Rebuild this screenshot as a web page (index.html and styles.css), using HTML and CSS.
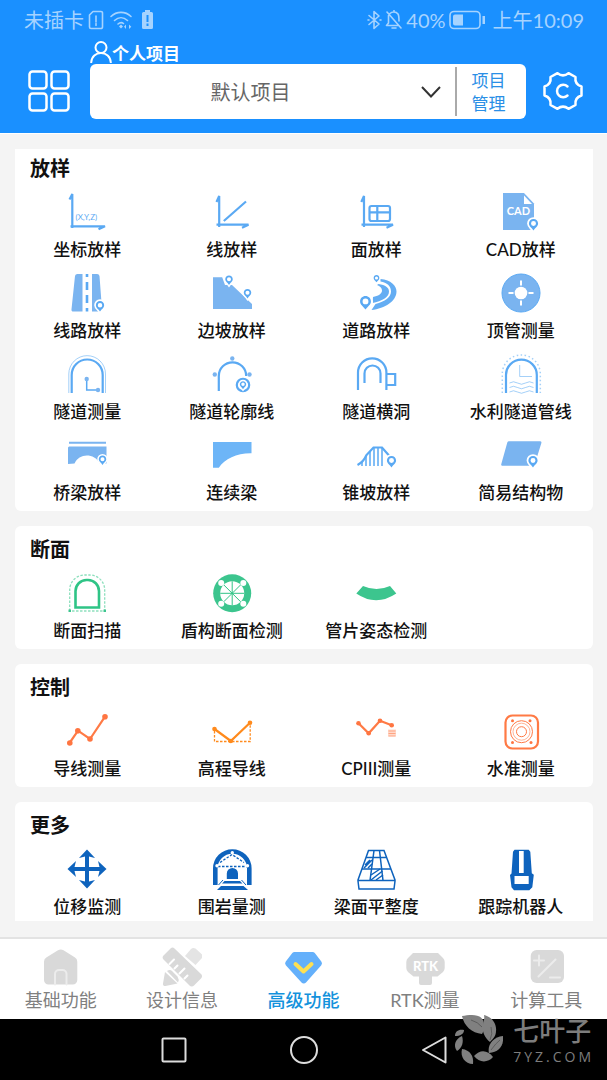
FILE: index.html
```html
<!DOCTYPE html>
<html lang="zh-CN">
<head>
<meta charset="utf-8">
<meta name="viewport" content="width=device-width, initial-scale=1">
<title>高级功能</title>
<link rel="stylesheet" href="styles.css">
</head>
<body>
<svg class="defs" aria-hidden="true">
  <symbol id="pin" viewBox="0 0 12 14" overflow="visible">
    <path class="halo" d="M6 1C3.200 1 1 3.200 1 6c0 3 3 4.500 5 7.500 2-3 5-4.500 5-7.500 0-2.800-2.200-5-5-5z"/>
    <path class="solid" fill-rule="evenodd" d="M6 1C3.200 1 1 3.200 1 6c0 3 3 4.500 5 7.500 2-3 5-4.500 5-7.500 0-2.800-2.200-5-5-5zM6 3.300a2.700 2.700 0 1 1 0 5.400 2.700 2.700 0 0 1 0-5.400z"/>
  </symbol>
</svg>
<header class="top">
  <div class="status">
    <div class="status-side">
      <span>未插卡</span>
      <svg width="17" height="20" viewBox="0 0 17 20"><path class="line" d="M6 1.500h8a1.500 1.500 0 0 1 1.500 1.500v14a1.500 1.500 0 0 1-1.500 1.500H4A1.500 1.500 0 0 1 2.500 17V5zM9 6v6M9 13.500v2"/></svg>
      <svg class="wifi" width="24" height="20" viewBox="0 0 24 20"><path class="line" d="M2 6.500c5.500-5.500 14.500-5.500 20 0M5.500 10.500c4-3.700 9-3.700 13 0M9 14c2-1.700 4-1.700 5.500-.5"/><path class="fill" d="M12 14.500l2 2-2 2-2-2zM17 14.500l-2 2.300 2 2.200zM20 14.500l2.300 2.300L20 19z"/></svg>
      <svg width="13" height="20" viewBox="0 0 13 20"><path class="fill" fill-rule="evenodd" d="M4 0h5v2h1.500a1.500 1.500 0 0 1 1.500 1.500v14a1.500 1.500 0 0 1-1.500 1.500h-8A1.500 1.500 0 0 1 1 17.500v-14A1.500 1.500 0 0 1 2.500 2H4zM5.500 5v7h2V5zM5.500 13.500v2.500h2v-2.500z"/></svg>
    </div>
    <div class="status-side right">
      <svg width="15" height="20" viewBox="0 0 15 20"><path class="line" d="M2 5.500l10 8.500-5 4.500v-17L12 6 2 14.500M1 10h1M13 10h1"/></svg>
      <svg class="bell" width="18" height="20" viewBox="0 0 18 20"><path class="line" d="M2 2l14 16M3.500 5.500V13L1.500 15.500H13M5 3.500C7 1.500 11 1.500 13 4c1 1.500 1 4 1 7M7 18h4M9 .5v1.500"/></svg>
      <span>40%</span>
      <svg width="37" height="20" viewBox="0 0 37 20"><rect class="line" x="1" y="1.500" width="30" height="17" rx="4"/><path class="fill" d="M6 4.500h8v11H6a2 2 0 0 1-2-2v-7a2 2 0 0 1 2-2zM33.500 6H36v8h-2.500z"/></svg>
      <span class="clock">上午10:09</span>
    </div>
  </div>
  <label class="owner" for="project">
    <svg width="22" height="22" viewBox="0 0 22 22"><circle class="line" cx="11" cy="6.500" r="5.500"/><path class="line" d="M1.200 21.500C1.500 15.500 6 12 11 12s9.500 3.500 9.800 9.500"/></svg>
    <span>个人项目</span>
  </label>
  <div class="project-row">
    <button class="icon-btn" aria-label="菜单">
      <svg width="42" height="42" viewBox="0 0 42 42"><g class="line"><rect x="1.500" y="1.500" width="17" height="17" rx="3"/><rect x="23.500" y="1.500" width="17" height="17" rx="3"/><rect x="1.500" y="23.500" width="17" height="17" rx="3"/><rect x="23.500" y="23.500" width="17" height="17" rx="3"/></g></svg>
    </button>
    <div class="project-box">
      <div class="picker">
        <select id="project"><option>默认项目</option></select>
        <svg class="chevron" width="20" height="12" viewBox="0 0 20 12"><path d="M1 1l9 9.500L19 1"/></svg>
      </div>
      <button class="manage">项目<br>管理</button>
    </div>
    <button class="icon-btn" aria-label="设置">
      <svg width="40" height="40" viewBox="0 0 40 40"><path class="line" d="M14.500 2.200Q20 6.500 25.500 2.200L32.500 6Q31.500 13.500 38.500 15.500V24.500Q31.500 26.500 32.500 34L25.500 37.800Q20 33.500 14.500 37.800L7.500 34Q8.500 26.500 1.500 24.500V15.500Q8.500 13.500 7.500 6Z"/><path class="line" d="M24.500 15.500a6.200 6.200 0 1 0 0 9"/></svg>
    </button>
  </div>
</header>

<main class="cards">
  <section class="card first sky">
    <h2>放样</h2>
    <div class="grid">
      <button class="item"><svg viewBox="0 0 40 40"><path class="s2" d="M2.500 7.500L5.300 2v34M3.500 34.300H38l-6.500 3"/><text class="tiny" x="8.500" y="28">(X,Y,Z)</text></svg><span>坐标放样</span></button>
      <button class="item"><svg viewBox="0 0 40 40"><path class="s2" d="M4.500 10l2.700-6v31M4.500 32.700H36.500l-6.500 3M11.800 29L34 9.500"/></svg><span>线放样</span></button>
      <button class="item"><svg viewBox="0 0 40 40"><path class="s2" d="M5.300 10L8 4v31M5.500 32.700H37l-6.500 3"/><rect class="s2" x="13.500" y="14" width="20.500" height="15" rx="2"/><path class="s2" d="M21.300 14v15M13.500 20.300H34"/></svg><span>面放样</span></button>
      <button class="item"><svg viewBox="0 0 40 40"><path class="f" d="M2 1h21l10 10.500V38H2z"/><path class="w" d="M23 3.500V12h8z"/><text class="badge" x="17.500" y="22.500">CAD</text><use href="#pin" x="27" y="26" width="11" height="13"/></svg><span>CAD放样</span></button>

      <button class="item"><svg viewBox="0 0 40 40"><path class="f" d="M10.500 1h5v37.500H6.500a2 2 0 0 1-2-2.300L8 3a2.500 2.500 0 0 1 2.500-2zM25 1h5a2.500 2.500 0 0 1 2.500 2L35 36.500a2 2 0 0 1-2 2h-8z"/><path class="s3" d="M20 1v3M20 9v8M20 22v8M20 35v3.500"/><use href="#pin" x="28" y="27" width="10" height="12"/></svg><span>线路放样</span></button>
      <button class="item"><svg viewBox="0 0 40 40"><path class="f" d="M1 4.300h9.200L13 12h7l20 19v5H1z"/><use href="#pin" x="12.500" y="1.500" width="9" height="11"/><use href="#pin" x="31" y="15" width="9" height="11"/></svg><span>边坡放样</span></button>
      <button class="item"><svg viewBox="0 0 40 40"><path class="f road" d="M24.500 6C35 7 40.500 12.500 40.500 18.500 40.500 28 29 35.500 15.500 37l4-6C29 28.500 35 24 35 18.500 35 13 31 9.500 24.500 8.500zM22.500 11c7 1 10.500 3.500 10.500 7.500 0 6-7 9.500-16.500 11.500L17 24c5-1 9-3 9-6.500 0-2.500-2-4.500-5-5.500z"/><use href="#pin" x="17" y="1.500" width="7" height="8"/><use href="#pin" x="3" y="21.500" width="13" height="16"/></svg><span>道路放样</span></button>
      <button class="item"><svg viewBox="0 0 40 40"><circle class="f" cx="20" cy="20" r="19"/><circle class="s1" cx="20" cy="20" r="19"/><circle class="w" cx="20" cy="20" r="6.300"/><path class="ws" d="M20 7.500v5M20 27.500v5M7.500 20h5M27.500 20h5"/></svg><span>顶管测量</span></button>

      <button class="item"><svg viewBox="0 0 40 40"><path class="s2" d="M4.700 39V21a15.500 15.500 0 0 1 31 0v18"/><path class="s1 pale" d="M1.800 39V20a18.300 18.300 0 0 1 36.700 0v19"/><path class="s15" d="M19.700 25v11H31"/><circle class="f" cx="19.700" cy="25" r="2.200"/><circle class="f" cx="31" cy="36" r="2.200"/></svg><span>隧道测量</span></button>
      <button class="item"><svg viewBox="0 0 40 40"><path class="s2" d="M6.800 37V22a13.700 13.700 0 0 1 27.400 0"/><circle class="f" cx="20.300" cy="4.500" r="2.200"/><circle class="f" cx="2.800" cy="20.500" r="2.200"/><circle class="f" cx="37.500" cy="20.500" r="2.200"/><circle class="s2 hollow" cx="31" cy="31" r="6.200"/><use href="#pin" x="27" y="26.500" width="8" height="9"/></svg><span>隧道轮廓线</span></button>
      <button class="item"><svg viewBox="0 0 40 40"><path class="s2" d="M2 36V18.500a14.200 14.200 0 0 1 28.400 0V36M8.500 29V19.500a8 8 0 0 1 16 0V29M30.400 20h8.800v11h-8.800"/></svg><span>隧道横洞</span></button>
      <button class="item"><svg viewBox="0 0 40 40"><path class="s2" d="M5 39V21a15.400 15.400 0 0 1 30.800 0v18"/><path class="s1 pale dots" d="M1.300 39V20a19 19 0 0 1 38 0v19"/><path class="s1 pale" d="M18.700 11v11.500H31M8.500 29q4-2.500 8 0t8 0 8 0M8.500 33.500q4-2.500 8 0t8 0 8 0M8.500 38q4-2.500 8 0t8 0 8 0"/></svg><span>水利隧道管线</span></button>

      <button class="item"><svg viewBox="0 0 40 40"><path class="f" d="M2 6.700h37v2H2zM2 11.500h37.500v17H33C27 17.500 12 18 7.500 28.500L1 29V12.500z"/><use href="#pin" x="31" y="19.500" width="9" height="11"/></svg><span>桥梁放样</span></button>
      <button class="item"><svg viewBox="0 0 40 40"><path class="f bright" d="M1 7h38.500v11.300C25 18 13 24 6.800 32.700H1z"/></svg><span>连续梁</span></button>
      <button class="item"><svg viewBox="0 0 40 40"><path class="s2" d="M1.500 30q6-3 9-10l7-7.500h8.500l7 8"/><path class="s15" d="M6 26.500V31M10 21v10M14 17v14M18 13v18M22 13v18M26 13v18"/><use href="#pin" x="30" y="20" width="11" height="13"/></svg><span>锥坡放样</span></button>
      <button class="item"><svg viewBox="0 0 40 40"><path class="f" d="M8 6.300h31a1.500 1.500 0 0 1 1.300 2l-6.500 21a2 2 0 0 1-2 1.400H1.500a1.200 1.200 0 0 1-1.200-1.700L6.300 7.500A1.800 1.800 0 0 1 8 6.300z"/><use href="#pin" x="26.500" y="20" width="11" height="13"/></svg><span>简易结构物</span></button>
    </div>
  </section>

  <section class="card green">
    <h2>断面</h2>
    <div class="grid">
      <button class="item"><svg viewBox="0 0 40 40"><path class="s1 pale dash" d="M2.700 38V17a15 15 0 0 1 15-15h5a15 15 0 0 1 15 15v21z"/><path class="s3" d="M8.500 34.500V18a11 11 0 0 1 11-11h1.500a11 11 0 0 1 11 11v16.500z"/><path class="f" d="M1.500 36.500h2.500V39H1.500zM36.500 36.500H39V39h-2.500z"/></svg><span>断面扫描</span></button>
      <button class="item"><svg viewBox="0 0 40 40"><circle class="f" cx="20.200" cy="20.300" r="19"/><circle class="w" cx="20.200" cy="20.300" r="12"/><path class="s1" d="M20.200 8.300v24M8.200 20.300h24M11.700 11.800l17 17M28.700 11.800l-17 17"/><g class="w"><circle cx="9.200" cy="10" r="3"/><circle cx="31.300" cy="10" r="3"/><circle cx="9.200" cy="30.700" r="3"/><circle cx="31.300" cy="30.700" r="3"/></g></svg><span>盾构断面检测</span></button>
      <button class="item"><svg viewBox="0 0 40 40"><path class="f" d="M7 13q13.500 6 27 0l6.300 7.500Q20 34 .3 20.500z"/></svg><span>管片姿态检测</span></button>
    </div>
  </section>

  <section class="card coral">
    <h2>控制</h2>
    <div class="grid">
      <button class="item"><svg viewBox="0 0 40 40"><path class="s2" d="M2.500 32l8.500-12.300L23 28 38 5.700"/><g class="f"><circle cx="2.800" cy="32" r="2.800"/><circle cx="10.800" cy="19.700" r="2.800"/><circle cx="23" cy="28" r="2.800"/><circle cx="38" cy="5.700" r="2.800"/></g></svg><span>导线测量</span></button>
      <button class="item amber"><svg viewBox="0 0 40 40"><path class="s2" d="M2.500 18l16.300 12L38 11.700"/><path class="s2 dash" d="M2.500 20v10.500h35.700V12"/><g class="f"><circle cx="2.500" cy="18" r="2.300"/><circle cx="18.800" cy="30" r="2.300"/><circle cx="38" cy="11.700" r="2.300"/></g></svg><span>高程导线</span></button>
      <button class="item"><svg viewBox="0 0 40 40"><path class="s2" d="M2.500 12.300l10.200 10L24 9.700l11.700 4.600"/><g class="f"><circle cx="2.500" cy="12.300" r="2.300"/><circle cx="12.700" cy="22.300" r="2.300"/><circle cx="24" cy="9.700" r="2.300"/><circle cx="35.700" cy="14.300" r="2.300"/></g><path class="s1 pale" d="M33 18.500v7M35 18.500v7M37 18.500v7M39 18.500v7M32.500 20h7M32.500 22.500h7M32.500 25h7"/></svg><span>CPIII测量</span></button>
      <button class="item"><svg viewBox="0 0 40 40"><rect class="s2" x="4.500" y="4.500" width="32.500" height="33" rx="7"/><circle class="s1" cx="20.500" cy="20.700" r="11"/><circle class="s1 pale" cx="20.500" cy="20.700" r="8.500"/><circle class="s1" cx="20.500" cy="20.700" r="5"/><g class="f"><circle cx="11.500" cy="9.800" r="1.500"/><circle cx="29" cy="9.800" r="1.500"/><circle cx="11.500" cy="31.500" r="1.500"/><circle cx="30" cy="31.500" r="1.500"/></g></svg><span>水准测量</span></button>
    </div>
  </section>

  <section class="card last navy">
    <h2>更多</h2>
    <div class="grid">
      <button class="item"><svg viewBox="0 0 40 40"><path class="f" d="M20 .5L28 9l-6-1.500v10.500h10.500L31 12l8.500 8L31 28l1.500-6H22v10.500l6-1.500-8 8.500-8-8.500 6 1.500V22H7.500L9 28 .5 20 9 12l-1.500 6H18V7.500L12 9z"/></svg><span>位移监测</span></button>
      <button class="item"><svg viewBox="0 0 40 40"><path class="f" fill-rule="evenodd" d="M1 36V19.500a19.300 19.300 0 0 1 38.600 0V36H35V19.500a14.700 14.700 0 0 0-29.400 0V36z"/><path class="s1 dash" d="M6 17.500h29M8 13.500l12-8 12 8"/><path class="f" d="M14.800 30v-5.500a5.500 5.500 0 0 1 11.200 0V30zM12.500 32h15.500l2.500 2.500H10zM9 37h22.500l4.500 4H5z"/><path class="s1" d="M11 31l-4.500 5M29.500 31l4.500 5"/><g class="w"><circle cx="20.300" cy="3.800" r="1.700"/><circle cx="5" cy="16.800" r="1.700"/><circle cx="35.500" cy="16.800" r="1.700"/></g></svg><span>围岩量测</span></button>
      <button class="item"><svg viewBox="0 0 40 40"><path class="s15" d="M12.500 1.500H28L39 31v1l-1 8H3l-1-8v-1zM2 31.500h37M10 8.500h20.500M6 20h29M18 1.500L14 31.500M23.500 1.500L27 31.500"/><path class="s15" d="M15 26l9-6M15 31l11.500-9M20 31l7-5M9 16l5-5M8 19l8-8M12 19l4-4"/></svg><span>梁面平整度</span></button>
      <button class="item"><svg viewBox="0 0 40 40"><path class="f" fill-rule="evenodd" d="M13.500 .8h14.200l1.600 2 1.500 21.500 2 1.500-1.500 12.500-3 3H13l-2.500-3L9 26l1.500-1.500L12 2.800zM18 2v22h4.700V2zM13.500 27v8h14.200v-8z"/></svg><span>跟踪机器人</span></button>
    </div>
  </section>
</main>

<nav class="tabs">
  <a href="#basic"><svg viewBox="0 0 40 40"><path class="g" d="M17 3.300a5 5 0 0 1 5.500 0L34 10.500a5 5 0 0 1 2.300 4.200V33a4.500 4.500 0 0 1-4.500 4.500H7.500A4.500 4.500 0 0 1 3 33V14.700a5 5 0 0 1 2.300-4.200z"/><path class="gl" d="M14 37.500V27a4 4 0 0 1 4-4h3.500a4 4 0 0 1 4 4v10.500"/></svg><span>基础功能</span></a>
  <a href="#design"><svg viewBox="0 0 40 40"><path class="g light" d="M23 9l6-7a4 4 0 0 1 4.500-.5l6 5.500a3 3 0 0 1 0 4.500l-6 6.500z"/><path class="g" d="M3 25l12.500 11.500-12 2.500a2 2 0 0 1-2.500-2.500zM5 24q3-2 5 0l5.500 5.500q2 3 .5 6z"/><path class="g" d="M1.500 8.500l7-7a3 3 0 0 1 4 0L39 27a3 3 0 0 1 0 4.500l-7 7a3 3 0 0 1-4.500 0L1.500 12.500a3 3 0 0 1 0-4z"/><path class="cut" d="M7.500 17l4.500-4.500M12.500 21.500l3-3M17.500 26.500l5-5M22.500 31.500l3-3"/></svg><span>设计信息</span></a>
  <a href="#advanced" class="active" aria-current="page"><svg viewBox="0 0 40 40"><path class="gem" d="M11.500 5h18a3 3 0 0 1 2.300 1l6.500 8.500a3 3 0 0 1 0 3.700L23 35.500a3 3 0 0 1-4.500 0L2.800 18.200a3 3 0 0 1 0-3.700L9.300 6a3 3 0 0 1 2.200-1z"/><path class="tick" d="M12.500 17l8 7.500 8-7.500"/></svg><span>高级功能</span></a>
  <a href="#rtk"><svg viewBox="0 0 40 40"><path class="g" d="M8 6h25l5 5a6 6 0 0 1 1.700 4v6a6 6 0 0 1-1.700 4l-5.500 4.500H27V36q0 2-2 2h-9q-2 0-2-2v-6.500H8.500L3 25a6 6 0 0 1-1.700-4v-6A6 6 0 0 1 3 11z"/><text class="badge rtk" x="20.500" y="24">RTK</text></svg><span>RTK测量</span></a>
  <a href="#tools"><svg viewBox="0 0 40 40"><rect class="g" x="4.700" y="3" width="33.300" height="33" rx="6"/><path class="gl" d="M8 13.500h10M13 8.500v10M12.500 29.500l17-17M24 30.500h10"/></svg><span>计算工具</span></a>
</nav>

<footer class="system">
  <button aria-label="最近任务"><svg viewBox="0 0 30 30"><rect x="3.500" y="3.500" width="23" height="23" rx="1"/></svg></button>
  <button aria-label="主页"><svg viewBox="0 0 30 30"><circle cx="15" cy="15" r="13"/></svg></button>
  <button aria-label="返回"><svg viewBox="0 0 30 30"><path d="M26.500 2.500v25L4 15z"/></svg></button>
  <div class="watermark">
    <svg width="50" height="50" viewBox="0 0 50 50"><path d="M9 2C16 1 26-1 30 6c1 5 2 9-1 14C19 19 11 12 9 2z"/><path d="M31 1c8 2 13 9 12 16 0 5-3 8-6 11-6-5-8-11-7-17 0-4 2-6 1-10z"/><path d="M50 22c1 10-4 16-14 17-2-8 4-16 14-17z"/><path d="M40 43c-5 6-14 6-19-1 6-7 14-6 19 1z"/><path d="M9 35c8 1 12 7 11 15C12 50 7 43 9 35z"/><path d="M9 22c2 6 0 12-5 15-4-5-2-12 5-15z"/><path d="M11 16c0 4-4 6-9 6 0-5 4-7 9-6z"/><path class="vein" d="M18 6q7 2 11 7M38 13q2 7-1 13M38 36q5-7 9-10"/></svg>
    <div class="brand"><strong>七叶子</strong><span>7YZ.COM</span></div>
  </div>
</footer>
</body>
</html>
```
FILE: styles.css
```css
* { box-sizing: border-box; }

body {
  margin: 0;
  min-height: 100vh;
  display: flex;
  flex-direction: column;
  background: #f4f4f4;
  color: #111;
  font-family: Lato, "Noto Sans CJK SC", "Noto Sans", sans-serif;
}

button, select {
  margin: 0;
  padding: 0;
  border: 0;
  background: none;
  color: inherit;
  font: inherit;
}

h2 { margin: 0; }
svg { display: block; flex: none; }
.defs { position: absolute; width: 0; height: 0; }

.line { fill: none; stroke: currentColor; stroke-width: 2; stroke-linecap: round; stroke-linejoin: round; }
.fill { fill: currentColor; }

/* header */
.top {
  background: #1a90ff;
  color: #fff;
  border-bottom: 1px solid #fff;
  padding-bottom: 14px;
}

.status {
  display: flex;
  justify-content: space-between;
  height: 40px;
  padding: 0 23px 0 24px;
  color: #a6d3ff;
  font-size: 20px;
  line-height: 40px;
}

.status-side { display: flex; align-items: center; gap: 3px; }
.status .line { stroke-width: 1.600; }
.wifi { margin: 0 5px 0 2px; }
.clock { margin-left: 4px; }

.owner {
  display: flex;
  align-items: center;
  height: 24px;
  width: max-content;
  margin-left: 90px;
  font-size: 17px;
  font-weight: 700;
}

.project-row {
  display: grid;
  grid-template-columns: 90px 1fr 81px;
  align-items: center;
}

.icon-btn { display: flex; justify-content: center; padding-bottom: 2px; }
.icon-btn:first-child { padding-left: 8px; }
.icon-btn:last-child { padding-right: 8px; }
.icon-btn .line { stroke-width: 2.500; }

.project-box {
  display: flex;
  align-items: center;
  height: 55px;
  border-radius: 6px;
  background: #fff;
}

.picker {
  position: relative;
  flex: 1;
  height: 49px;
  border-right: 2px solid #aaa;
}

.picker select {
  width: 100%;
  height: 100%;
  padding-right: 44px;
  appearance: none;
  color: #666;
  font-size: 20px;
  text-align: center;
  text-align-last: center;
}

.chevron { position: absolute; right: 14px; top: 19px; pointer-events: none; }
.chevron path { fill: none; stroke: #333; stroke-width: 2; }

.manage {
  width: 69px;
  padding-right: 6px;
  color: #2a8fe6;
  font-size: 17px;
  line-height: 23px;
}

/* cards */
.cards {
  flex: 1;
  display: flex;
  flex-direction: column;
  gap: 15px;
  padding: 15px 14px 16px 15px;
}

.card { padding: 11px 0 5px; border-radius: 6px; background: #fff; }
.card.first { padding-top: 7px; border-radius: 0 0 6px 6px; }
.card.last { padding-bottom: 1px; border-radius: 6px 6px 0 0; }

.card h2 {
  padding-left: 15px;
  margin-bottom: 12px;
  font-size: 20px;
  line-height: 24px;
  font-weight: 700;
}

.grid {
  display: grid;
  grid-template-columns: repeat(4, 1fr);
  row-gap: 10px;
}

.item {
  display: flex;
  flex-direction: column;
  align-items: center;
  gap: 5px;
  font-size: 17px;
  line-height: 26px;
  font-weight: 500;
  white-space: nowrap;
}

.item svg { width: 40px; height: 40px; overflow: visible; }

/* icon colours */
.sky { --ink: #5aa9f3; --body: #7ab4f0; }
.green { --ink: #2fc486; --body: #3cc58e; }
.coral { --ink: #ff7a45; --body: #ff7541; }
.amber { --ink: #ff8a1c; --body: #ff8a1c; }
.navy { --ink: #0e63bd; --body: #0e63bd; }

.f { fill: var(--body); }
.f.bright { fill: #6db5f7; }
.f.road { fill: #64adf3; }
.w { fill: #fff; }
.ws { fill: none; stroke: #fff; stroke-width: 2; }
.s1, .s15, .s2, .s3 { fill: none; stroke: var(--ink); stroke-width: 1; }
.s15 { stroke-width: 1.500; }
.s2 { stroke-width: 2.200; }
.s3 { stroke-width: 2.600; }
.pale { opacity: .55; }
.hollow { fill: #fff; }
.dots { stroke-width: 1.500; stroke-dasharray: 1.500 2.500; }
.dash { stroke-width: 1.300; stroke-dasharray: 2.500 1.500; }
.halo { fill: #fff; stroke: #fff; stroke-width: 4; }
.solid { fill: var(--ink); }
.tiny { fill: var(--ink); font-size: 8px; font-weight: 400; }
.badge { fill: #fff; font-size: 11px; font-weight: 700; text-anchor: middle; }
.badge.rtk { font-size: 13px; font-weight: 900; }

/* tab bar */
.tabs {
  display: grid;
  grid-template-columns: repeat(5, 1fr);
  height: 82px;
  padding-top: 8px;
  border-top: 2px solid #e3e3e3;
  background: #fff;
}

.tabs a {
  display: flex;
  flex-direction: column;
  align-items: center;
  color: #808080;
  font-size: 18px;
  line-height: 26px;
  text-decoration: none;
}

.tabs svg { width: 40px; height: 40px; }
.tabs .active { color: #1492dc; font-weight: 500; }
.g { fill: #d9d9d9; }
.g.light { fill: #e4e4e4; }
.gl { fill: none; stroke: #ececec; stroke-width: 2; stroke-linecap: round; }
.cut { fill: none; stroke: #fff; stroke-width: 2; stroke-linecap: round; }
.gem { fill: #64b0fb; }
.tick { fill: none; stroke: #ffe052; stroke-width: 4; stroke-linecap: round; stroke-linejoin: round; }

/* system bar */
.system {
  position: relative;
  display: flex;
  justify-content: center;
  align-items: center;
  gap: 100px;
  height: 61px;
  background: #000;
}

.system button svg { width: 30px; height: 30px; fill: none; stroke: #ddd; stroke-width: 2; stroke-linejoin: round; }

.watermark {
  position: absolute;
  right: 13px;
  top: -5px;
  display: flex;
  gap: 10px;
  color: #7d7d7d;
}

.watermark svg { fill: #808080; }
.watermark .vein { fill: none; stroke: #5c5c5c; stroke-width: 1; }
.brand { display: flex; flex-direction: column; padding-top: 3px; }
.brand strong { font-size: 26px; line-height: 28px; font-weight: 500; }
.brand span { font-family: "Open Sans", sans-serif; font-size: 14px; line-height: 24px; letter-spacing: 3px; }
```
